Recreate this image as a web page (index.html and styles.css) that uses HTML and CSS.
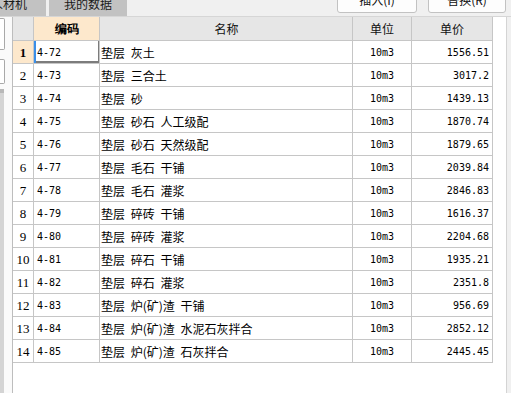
FILE: index.html
```html
<!DOCTYPE html>
<html lang="zh">
<head>
<meta charset="utf-8">
<link rel="stylesheet" href="styles.css">
</head>
<body>
<div class="topbar">
  <div class="tab tab-first"><span class="tab-text cut">人材机</span></div>
  <div class="tab tab-second"><span class="tab-text">我的数据</span></div>
  <div class="buttons">
    <div class="btn btn-insert">插入(I)</div>
    <div class="btn btn-replace">替换(R)</div>
  </div>
</div>
<div class="main">
  <div class="side">
    <div class="side-box box1"></div>
    <div class="side-box box2"></div>
    <div class="side-strip"></div>
  </div>
  <div class="panel">
    <div class="row head">
      <div class="c num"></div>
      <div class="c code sel-head">编码</div>
      <div class="c name center">名称</div>
      <div class="c unit">单位</div>
      <div class="c price center">单价</div>
    </div>
    <div class="row"><div class="c num sel-num">1</div><div class="c code focus">4-72</div><div class="c name">垫层 灰土</div><div class="c unit">10m3</div><div class="c price">1556.51</div></div>
    <div class="row"><div class="c num">2</div><div class="c code">4-73</div><div class="c name">垫层 三合土</div><div class="c unit">10m3</div><div class="c price">3017.2</div></div>
    <div class="row"><div class="c num">3</div><div class="c code">4-74</div><div class="c name">垫层 砂</div><div class="c unit">10m3</div><div class="c price">1439.13</div></div>
    <div class="row"><div class="c num">4</div><div class="c code">4-75</div><div class="c name">垫层 砂石 人工级配</div><div class="c unit">10m3</div><div class="c price">1870.74</div></div>
    <div class="row"><div class="c num">5</div><div class="c code">4-76</div><div class="c name">垫层 砂石 天然级配</div><div class="c unit">10m3</div><div class="c price">1879.65</div></div>
    <div class="row"><div class="c num">6</div><div class="c code">4-77</div><div class="c name">垫层 毛石 干铺</div><div class="c unit">10m3</div><div class="c price">2039.84</div></div>
    <div class="row"><div class="c num">7</div><div class="c code">4-78</div><div class="c name">垫层 毛石 灌浆</div><div class="c unit">10m3</div><div class="c price">2846.83</div></div>
    <div class="row"><div class="c num">8</div><div class="c code">4-79</div><div class="c name">垫层 碎砖 干铺</div><div class="c unit">10m3</div><div class="c price">1616.37</div></div>
    <div class="row"><div class="c num">9</div><div class="c code">4-80</div><div class="c name">垫层 碎砖 灌浆</div><div class="c unit">10m3</div><div class="c price">2204.68</div></div>
    <div class="row"><div class="c num">10</div><div class="c code">4-81</div><div class="c name">垫层 碎石 干铺</div><div class="c unit">10m3</div><div class="c price">1935.21</div></div>
    <div class="row"><div class="c num">11</div><div class="c code">4-82</div><div class="c name">垫层 碎石 灌浆</div><div class="c unit">10m3</div><div class="c price">2351.8</div></div>
    <div class="row"><div class="c num">12</div><div class="c code">4-83</div><div class="c name">垫层 炉(矿)渣 干铺</div><div class="c unit">10m3</div><div class="c price">956.69</div></div>
    <div class="row"><div class="c num">13</div><div class="c code">4-84</div><div class="c name">垫层 炉(矿)渣 水泥石灰拌合</div><div class="c unit">10m3</div><div class="c price">2852.12</div></div>
    <div class="row"><div class="c num">14</div><div class="c code">4-85</div><div class="c name">垫层 炉(矿)渣 石灰拌合</div><div class="c unit">10m3</div><div class="c price">2445.45</div></div>
  </div>
  <div class="right-strip"></div>
</div>
</body>
</html>
```
FILE: styles.css
```css
* { box-sizing: border-box; }
html, body {
  margin: 0;
  padding: 0;
}
body {
  width: 511px;
  height: 393px;
  overflow: hidden;
  background: #f0f0f0;
  font-family: "Noto Sans CJK SC", sans-serif;
  font-size: 12px;
  color: #000;
}
.topbar {
  display: flex;
  height: 16px;
  overflow: hidden;
  background: #f0f0f0;
}
.tab {
  height: 16px;
  background: #c2c2c2;
  display: flex;
  justify-content: center;
  overflow: hidden;
}
.tab-text {
  margin-top: -6px;
  line-height: 20px;
  font-size: 12px;
  color: #1a1a1a;
  white-space: nowrap;
}
.tab-first {
  width: 46px;
  justify-content: flex-start;
}
.tab-first .cut { margin-left: -9px; }
.tab-second {
  width: 78px;
  margin-left: 3px;
}
.buttons {
  display: flex;
  margin-left: auto;
  margin-right: 5px;
  gap: 11px;
}
.btn {
  height: 24px;
  margin-top: -11px;
  border: 1px solid #c2c2c2;
  border-radius: 3px;
  background: #fdfdfd;
  display: flex;
  align-items: center;
  justify-content: center;
  font-size: 12px;
  padding-bottom: 4px;
  color: #111;
}
.btn-insert { width: 80px; }
.btn-replace { width: 78px; }
.main {
  display: flex;
  height: 377px;
  border-top: 1px solid #d6d6d6;
  background: #f8f8f8;
}
.side {
  width: 12px;
  display: flex;
  flex-direction: column;
  background: #fafafa;
}
.side-box {
  width: 5px;
  background: #fff;
  border: 1px solid #a9a9a9;
  border-left: none;
  border-radius: 0 2px 2px 0;
}
.box1 { height: 32px; margin-top: 1px; }
.box2 { height: 25px; margin-top: 9px; }
.side-strip {
  width: 4px;
  flex: 1;
  margin-top: 5px;
  background: #d4d4d4;
  border-top: 4px solid #b8b8b8;
}
.panel {
  width: 495px;
  background: #fff;
  border-left: 1px solid #bdbdbd;
  border-right: 1px solid #d4d4d4;
  display: flex;
  flex-direction: column;
}
.right-strip {
  flex: 1;
  background: #f0f0f0;
}
.row {
  display: grid;
  grid-template-columns: 21px 66px 253px 59px 81px;
  height: 23px;
}
.row.head {
  height: 24px;
}
.c {
  border-right: 1px solid #c6c6c6;
  border-bottom: 1px solid #c6c6c6;
  display: flex;
  align-items: center;
  white-space: nowrap;
  overflow: hidden;
}
.head .c {
  background: #e6e6e6;
  justify-content: center;
  font-size: 12px;
  color: #111;
}
.head .sel-head {
  background: #fde8cc;
  font-weight: bold;
  color: #000;
  padding-left: 0;
}
.num {
  justify-content: center;
  font-family: "Liberation Serif", serif;
  font-size: 13px;
  padding-top: 1px;
}
.sel-num {
  background: #fde8cc;
  font-weight: bold;
}
.code {
  font-family: "DejaVu Sans Mono", monospace;
  font-size: 10px;
  padding-left: 3px;
  padding-top: 1px;
}
.focus {
  box-shadow: inset 2px 0 0 #3b8fe8, inset -1px -2px 0 #7c7c7c;
}
.name {
  padding-left: 1px;
  word-spacing: 3px;
}
.unit {
  justify-content: center;
  font-family: "DejaVu Sans Mono", monospace;
  font-size: 10px;
  padding-top: 1px;
}
.head .unit { font-family: "Noto Sans CJK SC", sans-serif; font-size: 12px; padding-top: 0; }
.price {
  justify-content: flex-end;
  padding-right: 3px;
  padding-top: 1px;
  font-family: "DejaVu Sans Mono", monospace;
  font-size: 10px;
}
.head .price { padding-right: 0; padding-top: 0; font-family: "Noto Sans CJK SC", sans-serif; font-size: 12px; }
```
